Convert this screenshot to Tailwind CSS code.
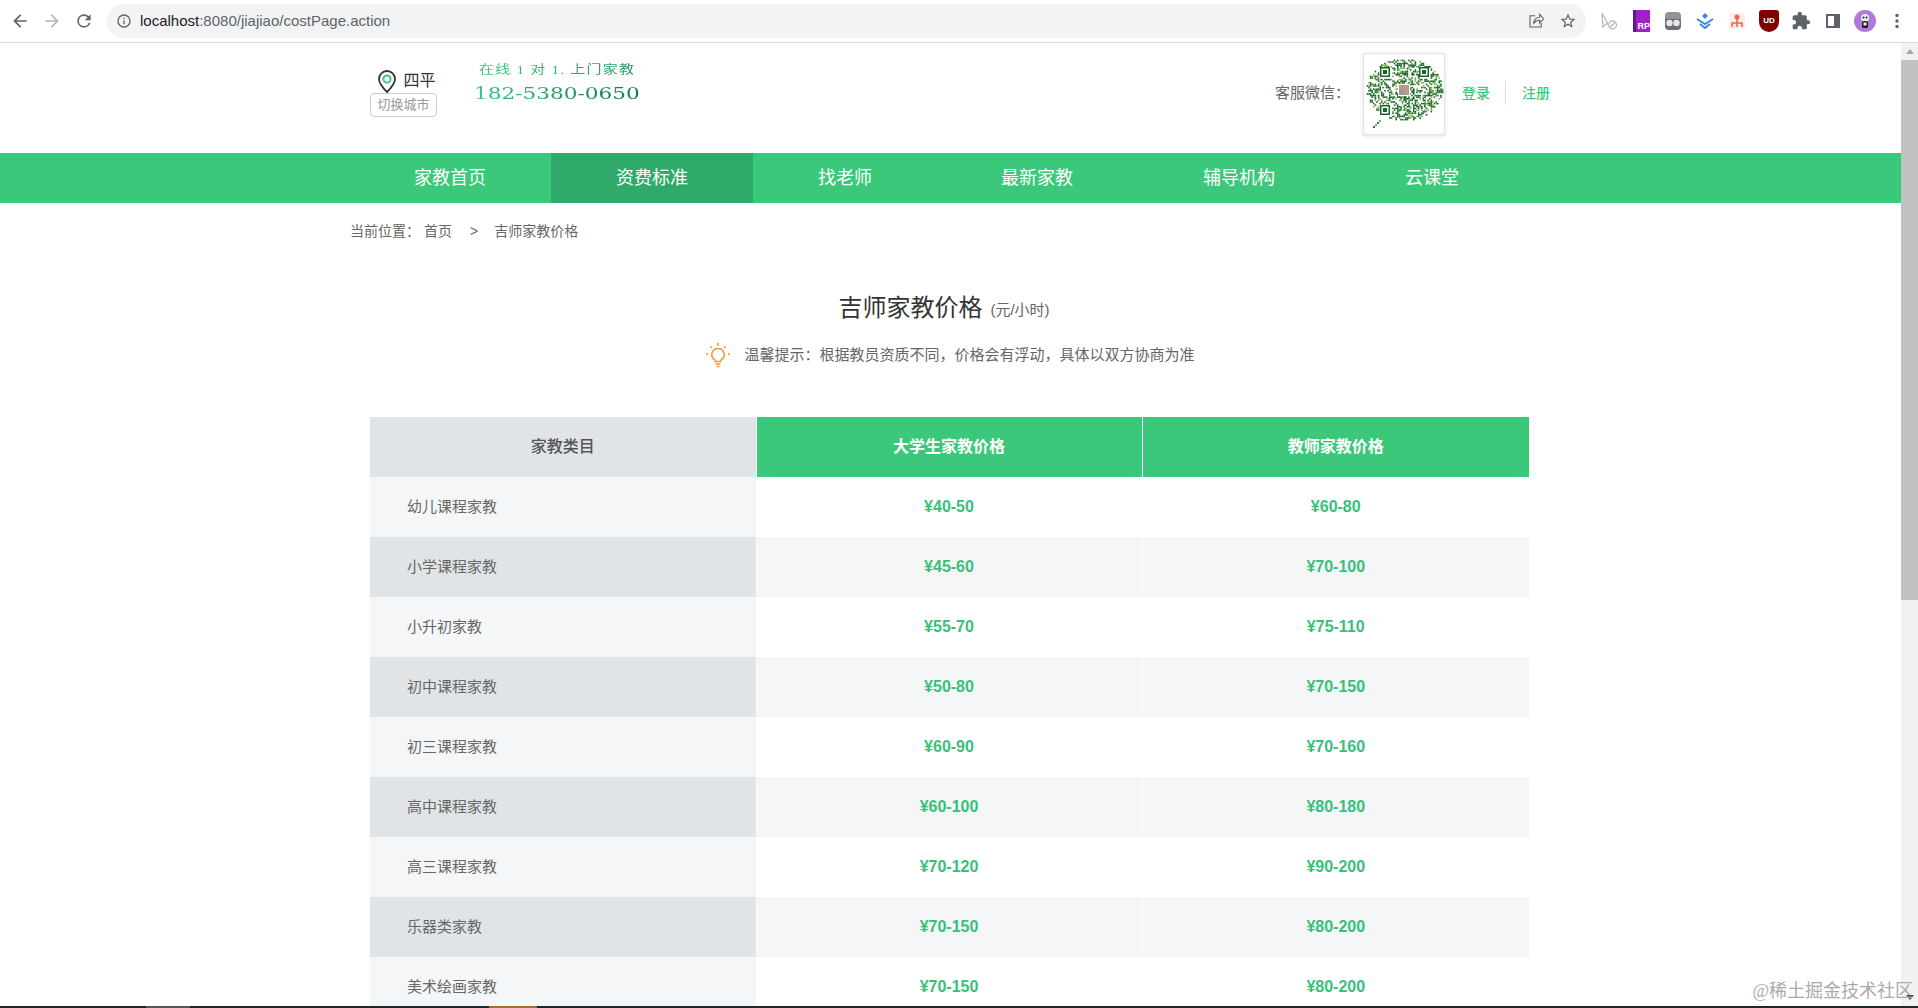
<!DOCTYPE html>
<html lang="en">
<head>
  <meta charset="UTF-8">
  <title>吉师家教价格</title>
  <script src="https://cdn.jsdelivr.net/npm/@tailwindcss/browser@4"></script>
</head>
<body class="h-screen overflow-hidden flex flex-col bg-white text-[#666] font-['Liberation_Sans','Noto_Sans_CJK_SC',sans-serif]">

  <!-- Browser toolbar -->
  <div class="h-[43px] shrink-0 flex items-center bg-white border-b border-[#dadce0]">
    <div class="w-[107px] shrink-0 flex items-center pl-[10px] gap-[12px]">
      <svg class="w-5 h-5" viewBox="0 0 24 24" fill="#5f6368"><path d="M20 11H7.83l5.59-5.59L12 4l-8 8 8 8 1.41-1.41L7.83 13H20v-2z"/></svg>
      <svg class="w-5 h-5" viewBox="0 0 24 24" fill="#b4b7bb"><path d="M12 4l-1.41 1.41L16.17 11H4v2h12.17l-5.58 5.59L12 20l8-8z"/></svg>
      <svg class="w-5 h-5" viewBox="0 0 24 24" fill="#5f6368"><path d="M17.65 6.35A7.96 7.96 0 0 0 12 4a8 8 0 1 0 7.73 10h-2.08A6 6 0 1 1 12 6c1.66 0 3.14.69 4.22 1.78L13 11h7V4l-2.35 2.35z"/></svg>
    </div>
    <div class="w-[1479px] h-[34px] shrink-0 rounded-full bg-[#f1f3f4] flex items-center pl-[9px] pr-[9px]">
      <svg class="w-4 h-4 shrink-0" viewBox="0 0 24 24" fill="#5f6368"><path d="M11 7h2v2h-2zm0 4h2v6h-2zm1-9a10 10 0 1 0 0 20 10 10 0 0 0 0-20zm0 18a8 8 0 1 1 0-16 8 8 0 0 1 0 16z"/></svg>
      <div class="ml-[8px] text-[15px] text-[#5f6368]"><span class="text-[#202124]">localhost</span>:8080/jiajiao/costPage.action</div>
      <div class="ml-auto flex items-center gap-[14px]">
        <svg class="w-[18px] h-[18px]" viewBox="0 0 24 24" fill="none" stroke="#5f6368" stroke-width="1.500"><path d="M11 5H4v15h15v-5M9 15c0-5 4-8 8-8V3l5 6-5 6v-4c-3 0-6 1-8 4z"/></svg>
        <svg class="w-[18px] h-[18px]" viewBox="0 0 24 24" fill="#5f6368"><path d="M22 9.24l-7.19-.62L12 2 9.19 8.63 2 9.24l5.46 4.73L5.82 21 12 17.27 18.18 21l-1.63-7.03L22 9.24zM12 15.4l-3.76 2.27 1-4.28-3.32-2.88 4.38-.38L12 6.1l1.71 4.04 4.38.38-3.32 2.88 1 4.28L12 15.4z"/></svg>
      </div>
    </div>
    <div class="flex items-center ml-[13px] gap-[12px]">
      <svg class="w-5 h-5" viewBox="0 0 20 20" fill="none" stroke="#b9bcc0" stroke-width="1.3"><path d="M3 2l1 14 3-3 2 0z"/><circle cx="13.5" cy="14" r="4"/><path d="M10.7 16.8l5.6-5.6"/></svg>
      <div class="w-[17px] h-[22px] flex items-end justify-end bg-[#a11fc4] border-l-[3px] border-[#5c1a8c] text-[9px] leading-[11px] font-bold text-white ml-[2px] mr-px">RP</div>
      <svg class="w-5 h-5" viewBox="0 0 20 20"><path d="M2 8V5a4 4 0 0 1 4-4h8a4 4 0 0 1 4 4v3z" fill="#8f9296"/><path d="M2 8h16v7a4 4 0 0 1-4 4H6a4 4 0 0 1-4-4z" fill="#6b6f73"/><circle cx="6.5" cy="12" r="3.2" fill="#e8e8e8"/><circle cx="13.5" cy="12" r="3.2" fill="#e8e8e8"/></svg>
      <svg class="w-5 h-5" viewBox="0 0 20 20" fill="none" stroke="#3b87e8" stroke-width="2"><path d="M2 8l8 5 8-5M5 13l5 4 5-4"/><path d="M10 2l3 3-3 3-3-3z" fill="#3b87e8" stroke="none"/></svg>
      <svg class="w-5 h-5" viewBox="0 0 20 20"><rect x="2" y="2" width="16" height="16" rx="2" fill="#fdeee9"/><circle cx="10" cy="6" r="2.5" fill="#e8694a"/><path d="M10 8v4M5 16v-4h10v4M10 12v4" stroke="#e8694a" stroke-width="1.6" fill="none"/></svg>
      <div class="w-5 h-[22px] flex items-center justify-center bg-[#800000] rounded-b-[10px] rounded-t-[3px] text-[8px] font-bold text-white">UD</div>
      <svg class="w-5 h-5" viewBox="0 0 24 24" fill="#5f6368"><path d="M20.5 11H19V7c0-1.1-.9-2-2-2h-4V3.5a2.5 2.5 0 0 0-5 0V5H4c-1.1 0-1.99.9-1.99 2v3.8H3.5c1.49 0 2.7 1.21 2.7 2.7s-1.21 2.7-2.7 2.7H2V20c0 1.1.9 2 2 2h3.8v-1.5c0-1.49 1.21-2.7 2.7-2.7s2.7 1.21 2.7 2.7V22H17c1.1 0 2-.9 2-2v-4h1.5a2.5 2.5 0 0 0 0-5z"/></svg>
      <svg class="w-5 h-5" viewBox="0 0 20 20"><path fill-rule="evenodd" d="M3 3h14v14H3zM5 5v10h6V5z" fill="#5f6368"/></svg>
      <svg class="w-[22px] h-[22px] -mx-px" viewBox="0 0 22 22"><circle cx="11" cy="11" r="11" fill="#b07ad9"/><circle cx="11" cy="8" r="4" fill="#eee"/><circle cx="9.5" cy="7.5" r="1" fill="#222"/><circle cx="12.5" cy="7.5" r="1" fill="#222"/><rect x="8" y="11" width="6" height="7" rx="1.5" fill="#222"/><rect x="9.5" y="12.5" width="3" height="3" fill="#eee"/></svg>
      <svg class="w-[20px] h-[20px]" viewBox="0 0 20 20" fill="#5f6368"><circle cx="10" cy="4.5" r="1.7"/><circle cx="10" cy="10" r="1.7"/><circle cx="10" cy="15.5" r="1.7"/></svg>
    </div>
  </div>

  <div class="flex-1 min-h-0 flex">
    <main class="w-[1901px] shrink-0 overflow-hidden">

      <!-- Top header -->
      <header class="h-[110px] w-[1200px] ml-[350px] pb-[8px] flex items-center">
        <div class="ml-[20px] w-[67px] flex flex-col items-center mt-[-2px]">
          <div class="ml-[7px] flex items-center gap-[7px] h-[24px] text-[16px] text-[#333]">
            <svg class="w-[18px] h-[23px]" viewBox="0 0 18 23"><path d="M9 1a8 8 0 0 0-8 8c0 5 5 10 8 13 3-3 8-8 8-13a8 8 0 0 0-8-8z" fill="none" stroke="#333" stroke-width="1.8"/><circle cx="9" cy="9" r="3.6" fill="none" stroke="#3cc87a" stroke-width="2"/></svg>
            <span>四平</span>
          </div>
          <div class="w-[67px] h-[24px] flex items-center justify-center border border-[#ccc] rounded-[4px] text-[13px] text-[#999]">切换城市</div>
        </div>
        <div class="ml-[37px] flex flex-col mt-[-24px] w-[170px]">
          <div class="ml-[5px] w-[125px] whitespace-nowrap origin-left scale-x-[1.25] text-[12px] tracking-[1px] leading-[16px] font-['Liberation_Serif','Noto_Sans_CJK_SC',serif] bg-gradient-to-r from-[#3cc87a] to-[#1a9a62] bg-clip-text text-transparent">在线 1 对 1. 上门家教</div>
          <div class="mt-[7px] w-[124px] origin-left scale-x-[1.35] text-[16px] leading-[18px] whitespace-nowrap font-['DejaVu_Serif',serif] bg-gradient-to-r from-[#35c77c] to-[#0a7a4e] bg-clip-text text-transparent">182-5380-0650</div>
        </div>
        <div class="ml-auto flex items-center">
          <div class="text-[15px] text-[#666] mt-[-2px]">客服微信&#65306;</div>
          <div class="ml-[13px] w-[82px] h-[82px] border border-[#e3e3e3] shadow-[0_1px_4px_rgba(0,0,0,0.12)] bg-white">
            <svg id="qr" class="w-full h-full" viewBox="0 0 80 80"></svg>
          </div>
          <a class="ml-[17px] mt-[-2px] text-[14px] font-medium text-[#3cc87a]">登录</a>
          <div class="ml-[15px] mt-[-2px] w-px h-[24px] bg-[#ddd]"></div>
          <a class="ml-[16px] mt-[-2px] text-[14px] font-medium text-[#3cc87a]">注册</a>
        </div>
      </header>

      <!-- Main nav -->
      <nav class="h-[50px] bg-[#3cc87a]">
        <ul class="w-[1200px] ml-[349px] flex text-[18px] text-white leading-[50px]">
          <li class="px-[65px]">家教首页</li>
          <li class="px-[65px] bg-[#30aa6a]">资费标准</li>
          <li class="pl-[65px] pr-[64px]">找老师</li>
          <li class="px-[65px]">最新家教</li>
          <li class="px-[65px]">辅导机构</li>
          <li class="px-[65px]">云课堂</li>
        </ul>
      </nav>

      <div class="w-[1200px] ml-[350px]">
        <!-- Breadcrumb -->
        <div class="h-[56px] flex items-center text-[14px] text-[#666]">
          <span>当前位置&#65306;</span>
          <span class="ml-[4px]">首页</span>
          <span class="ml-[18px]">&gt;</span>
          <span class="ml-[16px]">吉师家教价格</span>
        </div>

        <div class="mt-[29px] pr-[12px] h-[40px] flex items-center justify-center">
          <span class="text-[24px] text-[#333]">吉师家教价格</span>
          <span class="ml-[8px] mt-[4px] text-[15px] text-[#666]">(元/小时)</span>
        </div>
        <div class="mt-[12px] h-[30px] flex items-center justify-center">
          <svg class="w-[26px] h-[26px]" viewBox="0 0 26 26" fill="none" stroke="#f0992a" stroke-width="1.5"><path d="M13 6.5a6 6 0 0 0-3.5 11c.6.5.9 1 .9 2h5.2c0-1 .3-1.500.9-2A6 6 0 0 0 13 6.500z"/><path d="M10.500 22h5M11.500 24.500h3M13 1v3M3 12H1M25 12h-2M5.500 4.500L7 6M20.500 4.500L19 6"/></svg>
          <span class="ml-[13px] text-[15px] text-[#666]">温馨提示&#65306;根据教员资质不同&#65292;价格会有浮动&#65292;具体以双方协商为准</span>
        </div>

        <!-- Price table -->
        <table class="mt-[47px] ml-[20px] w-[1159px] table-fixed border-collapse text-[15px]">
          <thead>
            <tr class="h-[60px] text-[16px]">
              <th class="w-[386px] bg-[#e0e4e7] font-medium text-[#555]">家教类目</th>
              <th class="w-[386px] bg-[#3cc87a] border-l border-white text-white font-bold">大学生家教价格</th>
              <th class="bg-[#3cc87a] border-l border-white text-white font-bold">教师家教价格</th>
            </tr>
          </thead>
          <tbody>
            <tr class="h-[60px]">
              <td class="bg-[#f4f6f8] pl-[37px]">幼儿课程家教</td>
              <td class="bg-white border-l border-white text-center text-[16px] font-bold text-[#3abf7a]">¥40-50</td>
              <td class="bg-white border-l border-white text-center text-[16px] font-bold text-[#3abf7a]">¥60-80</td>
            </tr>
            <tr class="h-[60px]">
              <td class="bg-[#e0e4e7] pl-[37px]">小学课程家教</td>
              <td class="bg-[#f4f6f8] border-l border-white text-center text-[16px] font-bold text-[#3abf7a]">¥45-60</td>
              <td class="bg-[#f4f6f8] border-l border-white text-center text-[16px] font-bold text-[#3abf7a]">¥70-100</td>
            </tr>
            <tr class="h-[60px]">
              <td class="bg-[#f4f6f8] pl-[37px]">小升初家教</td>
              <td class="bg-white border-l border-white text-center text-[16px] font-bold text-[#3abf7a]">¥55-70</td>
              <td class="bg-white border-l border-white text-center text-[16px] font-bold text-[#3abf7a]">¥75-110</td>
            </tr>
            <tr class="h-[60px]">
              <td class="bg-[#e0e4e7] pl-[37px]">初中课程家教</td>
              <td class="bg-[#f4f6f8] border-l border-white text-center text-[16px] font-bold text-[#3abf7a]">¥50-80</td>
              <td class="bg-[#f4f6f8] border-l border-white text-center text-[16px] font-bold text-[#3abf7a]">¥70-150</td>
            </tr>
            <tr class="h-[60px]">
              <td class="bg-[#f4f6f8] pl-[37px]">初三课程家教</td>
              <td class="bg-white border-l border-white text-center text-[16px] font-bold text-[#3abf7a]">¥60-90</td>
              <td class="bg-white border-l border-white text-center text-[16px] font-bold text-[#3abf7a]">¥70-160</td>
            </tr>
            <tr class="h-[60px]">
              <td class="bg-[#e0e4e7] pl-[37px]">高中课程家教</td>
              <td class="bg-[#f4f6f8] border-l border-white text-center text-[16px] font-bold text-[#3abf7a]">¥60-100</td>
              <td class="bg-[#f4f6f8] border-l border-white text-center text-[16px] font-bold text-[#3abf7a]">¥80-180</td>
            </tr>
            <tr class="h-[60px]">
              <td class="bg-[#f4f6f8] pl-[37px]">高三课程家教</td>
              <td class="bg-white border-l border-white text-center text-[16px] font-bold text-[#3abf7a]">¥70-120</td>
              <td class="bg-white border-l border-white text-center text-[16px] font-bold text-[#3abf7a]">¥90-200</td>
            </tr>
            <tr class="h-[60px]">
              <td class="bg-[#e0e4e7] pl-[37px]">乐器类家教</td>
              <td class="bg-[#f4f6f8] border-l border-white text-center text-[16px] font-bold text-[#3abf7a]">¥70-150</td>
              <td class="bg-[#f4f6f8] border-l border-white text-center text-[16px] font-bold text-[#3abf7a]">¥80-200</td>
            </tr>
            <tr class="h-[60px]">
              <td class="bg-[#f4f6f8] pl-[37px]">美术绘画家教</td>
              <td class="bg-white border-l border-white text-center text-[16px] font-bold text-[#3abf7a]">¥70-150</td>
              <td class="bg-white border-l border-white text-center text-[16px] font-bold text-[#3abf7a]">¥80-200</td>
            </tr>
          </tbody>
        </table>
      </div>
    </main>

    <!-- Scrollbar -->
    <div class="w-[17px] shrink-0 bg-[#f1f1f1] flex flex-col items-center">
      <div class="h-[17px] flex items-center justify-center">
        <div class="w-0 h-0 border-x-[4px] border-x-transparent border-b-[5px] border-b-[#a3a3a3]"></div>
      </div>
      <div class="w-full h-[540px] bg-[#c1c1c1]"></div>
      <div class="mt-auto h-[17px] flex items-center justify-center">
        <div class="w-0 h-0 border-x-[4px] border-x-transparent border-t-[5px] border-t-[#505050]"></div>
      </div>
    </div>
  </div>

  <!-- Cropped taskbar -->
  <div class="h-[2px] shrink-0 bg-[#1a2b2b] flex">
    <div class="ml-[146px] w-[44px] bg-[#555]"></div>
    <div class="ml-[299px] w-[48px] bg-[#a66e2e]"></div>
  </div>

  <!-- Watermark -->
  <div class="absolute right-[5px] bottom-[5px] text-[18px] leading-[24px] text-[#aaa] font-['Liberation_Serif','Noto_Sans_CJK_SC',serif]">@稀土掘金技术社区</div>

  <script>
    // fake QR code, seeded so every render is the same
    var svg = document.getElementById('qr');
    var seed = 7;
    function rnd() { seed = (seed * 16807) % 2147483647; return seed / 2147483647; }
    function rect(x, y, w, h, c) {
      var r = document.createElementNS('http://www.w3.org/2000/svg', 'rect');
      r.setAttribute('x', x); r.setAttribute('y', y);
      r.setAttribute('width', w); r.setAttribute('height', h);
      r.setAttribute('fill', c);
      svg.appendChild(r);
    }
    function inFinder(x, y) {
      return [[21, 18], [60, 18], [21, 56]].some(function (f) {
        return Math.abs(x - f[0]) < 6 && Math.abs(y - f[1]) < 6;
      });
    }
    for (var y = 4; y < 66; y += 1.600) {
      for (var x = 1; x < 79; x += 1.600) {
        var dx = (x - 40) / 38, dy = (y - 35) / 31;
        if (dx * dx + dy * dy > 1 || inFinder(x, y) || rnd() < 0.5) continue;
        rect(x, y, 1.600, 1.600, rnd() < 0.75 ? '#17652a' : '#7fb04a');
      }
    }
    for (var i = 0; i < 4; i++) rect(9 + i * 2, 72 - i * 2, 2, 2, i % 2 ? '#7fb04a' : '#2f7a34');
    [[21, 18], [60, 18], [21, 56]].forEach(function (f) {
      rect(f[0] - 5, f[1] - 5, 10, 10, '#17652a');
      rect(f[0] - 3.500, f[1] - 3.500, 7, 7, '#fff');
      rect(f[0] - 2, f[1] - 2, 4, 4, '#17652a');
    });
    rect(34, 30, 12, 12, '#fff');
    rect(35, 31, 10, 10, '#b89a86');
    rect(35, 36, 5, 5, '#8e9aa8');
  </script>
</body>
</html>
